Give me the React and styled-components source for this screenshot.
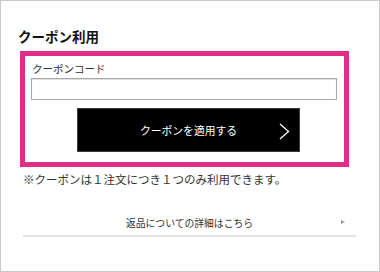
import React from "react";
import styled, { createGlobalStyle } from "styled-components";

const Global = createGlobalStyle`
  html, body { margin: 0; padding: 0; background: #fff; }
  * { box-sizing: border-box; }
  body { font-family: "Noto Sans CJK JP", "Noto Sans", sans-serif; color: #222; }
`;

const Frame = styled.div`
  width: 380px;
  height: 272px;
  border: 1px solid #c9c9c9;
  display: flex;
  flex-direction: column;
  align-items: flex-start;
`;

const Heading = styled.h2`
  margin: 28px 0 0 17px;
  font-size: 13.5px;
  line-height: 14px;
  height: 14px;
  font-weight: 700;
  color: #111;
`;

const CouponBox = styled.div`
  margin: 8px 0 0 19px;
  width: 329px;
  height: 116px;
  border: 5px solid #dd2f88;
  display: flex;
  flex-direction: column;
  align-items: flex-start;
`;

const Label = styled.label`
  margin: 7px 0 0 7px;
  font-size: 10.5px;
  line-height: 12px;
  color: #333;
`;

const Input = styled.input`
  margin: 3px 0 0 6px;
  width: 306px;
  height: 22px;
  border: 1px solid #a8a8a8;
  box-shadow: inset 0 1px 1px #ddd;
  outline: none;
  padding: 0 4px;
  background: #fff;
`;

const ApplyButton = styled.button`
  position: relative;
  margin: 8px 0 0 52px;
  width: 223px;
  height: 44px;
  background: #000;
  border: 1px solid #3c3c3c;
  color: #fff;
  font-family: inherit;
  font-size: 10.8px;
  line-height: 14px;
  display: flex;
  align-items: center;
  justify-content: center;
  padding: 0;
  cursor: pointer;
`;

const Chevron = styled.svg`
  position: absolute;
  right: 9px;
  top: 14px;
`;

const Note = styled.p`
  margin: 5px 0 0 22px;
  font-size: 11.5px;
  line-height: 14px;
  color: #333;
  white-space: nowrap;
`;

const LinkRow = styled.a`
  position: relative;
  margin: 26px 0 0 22px;
  width: 333px;
  height: 25px;
  border-bottom: 2px solid #e4e4e4;
  display: flex;
  align-items: center;
  justify-content: center;
  padding-bottom: 2px;
  font-size: 9.8px;
  color: #333;
  text-decoration: none;
`;

const Arrow = styled.span`
  position: absolute;
  right: 11px;
  top: 8px;
  width: 0;
  height: 0;
  border-top: 2.5px solid transparent;
  border-bottom: 2.5px solid transparent;
  border-left: 4px solid #999;
`;

export default function App() {
  return (
    <>
      <Global />
      <Frame>
        <Heading>クーポン利用</Heading>
        <CouponBox>
          <Label>クーポンコード</Label>
          <Input type="text" />
          <ApplyButton>
            クーポンを適用する
            <Chevron width="11" height="17" viewBox="0 0 11 17">
              <polyline points="1,1 9.5,8.5 1,16" fill="none" stroke="#fff" strokeWidth="1.3" />
            </Chevron>
          </ApplyButton>
        </CouponBox>
        <Note>※クーポンは１注文につき１つのみ利用できます。</Note>
        <LinkRow href="#">
          返品についての詳細はこちら
          <Arrow />
        </LinkRow>
      </Frame>
    </>
  );
}
